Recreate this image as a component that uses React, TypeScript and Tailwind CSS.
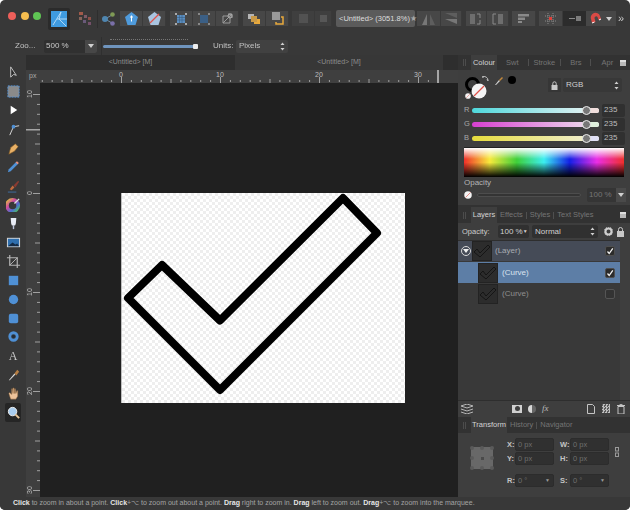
import React from 'react';

const hTicks = Array.from({ length: 42 }, (_, i) => i - 9);
const vTicks = Array.from({ length: 43 }, (_, i) => i - 11);

const Btn = ({ w = 'w-[23px]', children, className = '' }: { w?: string; children?: React.ReactNode; className?: string }) => (
  <div className={`${w} h-[15px] bg-[#474747] flex items-center justify-center border-r border-[#3a3a3a] ${className}`}>{children}</div>
);

const Field = ({ className = '', children }: { className?: string; children?: React.ReactNode }) => (
  <div className={`h-[13px] bg-[#303030] rounded-[2px] flex items-center whitespace-nowrap text-[7.5px] ${className}`}>{children}</div>
);

const UpDown = () => (
  <svg width="5" height="9" viewBox="0 0 5 9" className="ml-auto mr-[3px]"><path d="M2.5 0.5 4.5 3H.5zM2.5 8.5 4.5 6H.5z" fill="#cfcfcf" /></svg>
);

const Caret = () => (
  <svg width="6" height="4" viewBox="0 0 6 4"><path d="M0 0h6L3 4z" fill="#d0d0d0" /></svg>
);

const NoFill = ({ size }: { size: number }) => (
  <svg width={size} height={size} viewBox="0 0 16 16">
    <circle cx="8" cy="8" r="7.5" fill="#f4f4f4" />
    <path d="M3 13 13 3" stroke="#e0524a" strokeWidth="1.3" />
  </svg>
);

const Tick = ({ dark = false }: { dark?: boolean }) => (
  <div className={`w-[10px] h-[10px] rounded-[2px] flex items-center justify-center ${dark ? 'bg-[#333333] border border-[#555555]' : 'bg-[#2b2b2b] border border-[#4f4f4f]'}`}>
    {!dark && (
      <svg width="8" height="8" viewBox="0 0 8 8"><path d="M1.5 4.5 3.2 6.5 6.8 1.3" fill="none" stroke="#f2f2f2" strokeWidth="1.3" /></svg>
    )}
  </div>
);

const Thumb = ({ stroke = '#151515' }: { stroke?: string }) => (
  <div className="w-[20px] h-[20px] bg-[#2c2c2c] border border-[#232323] flex items-center justify-center">
    <svg width="18" height="14" viewBox="0 0 18 14"><path d="M1 8 4 5 7 9 15 1 17 3 7 13z" fill="none" stroke={stroke} strokeWidth="1" /></svg>
  </div>
);

const Grip = () => <div className="w-[3px] h-[7px] border-x border-[#4c4c4c] mx-[5px] shrink-0" />;

const TabSep = ({ className = '' }: { className?: string }) => <div className={`w-px h-[7px] bg-[#4f4f4f] shrink-0 ${className}`} />;

const PanelMenu = () => <div className="ml-auto mr-[4px] w-[6px] h-[6px] bg-[#b8b8b8] border-t-2 border-[#dddddd] shrink-0" />;

const Slider = ({ label, color, end }: { label: string; color: string; end: string }) => (
  <div className="flex items-center h-[14px] pl-[6px]">
    <span className="w-[8px] text-[7.5px] text-[#a8a8a8]">{label}</span>
    <div className={`w-[127px] h-[5px] rounded-full relative ${color}`}>
      <div className={`absolute right-0 top-0 w-[13px] h-[5px] rounded-r-full ${end}`} />
      <div className="absolute left-[110px] top-[-2px] w-[9px] h-[9px] rounded-full bg-[#777777] border-[1.5px] border-[#eeeeee]" />
    </div>
    <Field className="w-[23px] ml-[3px] pl-[2px] text-[#bdbdbd] text-[8px]">235</Field>
  </div>
);

const TransformField = ({ label, value, caret = false, first = false }: { label: string; value: string; caret?: boolean; first?: boolean }) => (
  <div className={`flex items-center ${first ? '' : 'ml-[6px]'}`}>
    <span className={`${first ? 'w-[8px]' : 'w-[10px]'} text-[7.5px] font-bold text-[#c4c4c4]`}>{label}</span>
    <Field className="w-[39px] pl-[2px] text-[#6f6f6f] border border-[#2c2c2c]">
      {value}
      {caret && <span className="ml-auto mr-[3px] text-[5px] text-[#999999]">▼</span>}
    </Field>
  </div>
);

const tools: React.ReactNode[] = [
  <path key="a" d="M5 2v11l3-3 3 1z" fill="#2b2b2b" stroke="#c9c9c9" />,
  <g key="b"><rect x="2" y="2" width="12" height="12" fill="#8a8a8a" stroke="#4f90d5" strokeDasharray="2 1" /></g>,
  <path key="c" d="M5 3v9l7-4.500z" fill="#ffffff" />,
  <g key="d"><path d="M4 14 8 5 14 4" fill="none" stroke="#dddddd" /><circle cx="8" cy="5" r="2" fill="#4f90d5" /></g>,
  <g key="e"><path d="M3 14 5 7 10 3 13 6 9 11z" fill="#e8b066" stroke="#7a5320" strokeWidth=".6" /></g>,
  <g key="f"><path d="M3 11 11 3 13 5 5 13 2 14z" fill="#4f90d5" /><path d="M11 3 13 5" stroke="#eb8f7c" strokeWidth="2" /></g>,
  <g key="g"><path d="M4 12 7 8 9 10 6 13z" fill="#c26a3d" /><path d="M8 8 13 3 14 4 10 10z" fill="#8a3b32" /><path d="M2 15h9" stroke="#3f6ea3" /></g>,
  <g key="h"><circle cx="7" cy="9" r="6" fill="none" stroke="url(#wheel)" strokeWidth="4" /><path d="M9 7 14 2" stroke="#dddddd" strokeWidth="1.500" /></g>,
  <g key="i"><path d="M5 2h6l-.5 6a2.500 2.500 0 0 1-5 0z" fill="#e8ecf5" /><path d="M8 10v4" stroke="#b9c2d9" strokeWidth="1.500" /></g>,
  <g key="j"><rect x="1" y="3" width="14" height="10" fill="#d8d8d8" /><rect x="2" y="4" width="12" height="8" fill="#2f6fae" /><path d="M2 12 7 8l3 2 2-1 2 3z" fill="#142a44" /></g>,
  <g key="k"><path d="M4 1v11h11M1 4h11v11" fill="none" stroke="#b4b4b4" strokeWidth="1.300" /><path d="M4 12 12 4" stroke="#b4b4b4" /></g>,
  <rect key="l" x="3" y="3" width="10" height="10" fill="#4f90d5" />,
  <circle key="m" cx="8" cy="8" r="5" fill="#4f90d5" />,
  <rect key="n" x="3" y="3" width="10" height="10" rx="2" fill="#4f90d5" />,
  <g key="o"><circle cx="8" cy="8" r="4" fill="none" stroke="#4f90d5" strokeWidth="3" /><circle cx="8" cy="8" r="1.500" fill="#1e2b3a" /></g>,
  null,
  <g key="q"><path d="M3 14 9 7 10 8 4 14z" fill="#dddddd" /><path d="M9 7 12 3l2 2-3 4z" fill="#b77f45" /></g>,
  <path key="r" d="M5 14 3 8l1-1 2 2V3l1 0 .5 5V2l1 0 .5 6V3h1l.5 5 1-3h1v6l-2 3z" fill="#eec39a" stroke="#8a6038" strokeWidth=".5" />,
  <g key="s"><circle cx="7" cy="7" r="4.500" fill="#a9cdef" stroke="#eeeeee" /><path d="M10 10 14 14" stroke="#e9c79a" strokeWidth="2" /></g>,
];

export default function App() {
  return (
    <div className="w-[630px] h-[510px] bg-white overflow-hidden font-['Liberation_Sans',sans-serif]">
      <div className="w-full h-full bg-[#383838] rounded-[5px] overflow-hidden flex flex-col text-[#c2c2c2] blur-[0.25px]">
        {/* top toolbar */}
        <div className="h-[37px] flex items-center pl-[8px] shrink-0">
          <div className="flex gap-[4.500px] self-start mt-[12px]">
            <div className="w-[8px] h-[8px] rounded-full bg-[#ee5f5a]" />
            <div className="w-[8px] h-[8px] rounded-full bg-[#f5bd4f]" />
            <div className="w-[8px] h-[8px] rounded-full bg-[#5fc454]" />
          </div>
          <div className="w-[22px] h-[22px] ml-[7px] bg-[#2b2b2b] rounded-[2px] flex items-center justify-center">
            <svg width="16" height="16" viewBox="0 0 16 16">
              <rect width="16" height="16" fill="#3f9be0" />
              <path d="M2 14 10 1M6 8h10M10 1l-2 7 7 7" fill="none" stroke="#c9e6fb" strokeWidth=".8" />
            </svg>
          </div>
          <svg width="13" height="13" viewBox="0 0 13 13" className="ml-[9px]">
            <rect x="0" y="0" width="4" height="3" fill="#a15a4a" /><rect x="5" y="3" width="3" height="3" fill="#7e5a66" /><rect x="0" y="5" width="3" height="3" fill="#88645a" /><rect x="9" y="5" width="3" height="3" fill="#8f5048" /><rect x="4" y="8" width="3" height="3" fill="#6a5a7a" /><rect x="9" y="10" width="3" height="3" fill="#75506a" />
          </svg>
          <div className="w-px h-[18px] bg-[#2e2e2e] ml-[5px]" />
          <svg width="13" height="14" viewBox="0 0 13 14" className="ml-[4px]">
            <path d="M3 7 10 3M3 7l7 4" stroke="#6f8fa8" /><circle cx="3" cy="7" r="3" fill="#4f86b0" /><circle cx="10.500" cy="2.500" r="2.300" fill="#7f9a55" /><circle cx="10.500" cy="11.500" r="2.300" fill="#7a6fa8" />
          </svg>
          <div className="flex ml-[5px]">
            <Btn><svg width="13" height="13" viewBox="0 0 13 13"><path d="M6.500 0 13 5l-2.500 8h-8L0 5z" fill="#4f9bdc" /><path d="M6.500 3.500v6M5 5h3" stroke="#fff" /></svg></Btn>
            <Btn><svg width="13" height="13" viewBox="0 0 13 13"><path d="M6.500 0 13 5l-2.500 8h-8L0 5z" fill="#a9c4e0" /><path d="M2 11 11 2" stroke="#e0524a" strokeWidth="1.300" /></svg></Btn>
          </div>
          <div className="flex ml-[4px]">
            <Btn><svg width="12" height="12" viewBox="0 0 12 12"><rect x="2" y="2" width="8" height="8" fill="#5b8ec0" /><path d="M2 4.500h8M2 7h8M4.500 2v8M7 2v8" stroke="#3a5e82" strokeWidth=".6" /><rect x="0" y="0" width="2" height="2" fill="#aaaaaa" /><rect x="10" y="0" width="2" height="2" fill="#aaaaaa" /><rect x="0" y="10" width="2" height="2" fill="#aaaaaa" /><rect x="10" y="10" width="2" height="2" fill="#aaaaaa" /></svg></Btn>
            <Btn><svg width="12" height="12" viewBox="0 0 12 12"><rect x="2" y="2" width="8" height="8" fill="#3b5f85" /><rect x="0" y="0" width="2" height="2" fill="#888888" /><rect x="10" y="0" width="2" height="2" fill="#888888" /><rect x="0" y="10" width="2" height="2" fill="#888888" /><rect x="10" y="10" width="2" height="2" fill="#888888" /></svg></Btn>
            <Btn><svg width="13" height="13" viewBox="0 0 13 13"><path d="M2 11V4h7v7zM7 2h4v4M2 11 11 2" fill="none" stroke="#9a9a9a" /><circle cx="9" cy="4" r="2" fill="none" stroke="#b0b0b0" /></svg></Btn>
          </div>
          <div className="flex ml-[4px]">
            <Btn><svg width="12" height="12" viewBox="0 0 12 12"><rect x="0" y="1" width="6" height="5" fill="#b5b5b5" /><rect x="6" y="6" width="6" height="5" fill="#e8a93c" /><rect x="3" y="3" width="6" height="6" fill="#c99a48" /></svg></Btn>
            <Btn><svg width="13" height="13" viewBox="0 0 13 13"><rect x="1" y="0" width="8" height="8" fill="#9a9a9a" /><path d="M10 5h2v7H5v-2" fill="none" stroke="#e8a93c" strokeWidth="1.500" /></svg></Btn>
          </div>
          <div className="flex ml-[3px] opacity-50">
            <Btn><div className="w-[9px] h-[9px] bg-[#6d6d6d]" /></Btn>
            <Btn w="w-[17px]"><div className="w-[7px] h-[7px] bg-[#777777]" /></Btn>
          </div>
          <div className="w-[79px] h-[17px] ml-[4px] bg-[#5b5b5b] rounded-[2px] flex items-center pl-[3px] text-[7.5px] text-[#dedede] whitespace-nowrap">
            <span>&lt;Untitled&gt; (3051.8%)</span>
            <span className="ml-auto mr-[2px] text-[#a5a5a5]">★</span>
          </div>
          <div className="flex ml-[2px]">
            <Btn w="w-[24px]"><svg width="13" height="12" viewBox="0 0 13 12"><path d="M5 1v11H0z" fill="#777777" /><path d="M8 1v11h5z" fill="#5e5e5e" /></svg></Btn>
            <Btn w="w-[21px]"><svg width="13" height="12" viewBox="0 0 13 12"><path d="M12 0H0l12 5z" fill="#5e5e5e" /><path d="M12 6H0l12 5z" fill="#777777" /></svg></Btn>
          </div>
          <div className="flex ml-[4px]">
            <Btn w="w-[21px]"><svg width="12" height="12" viewBox="0 0 12 12"><rect x="0" y="1" width="5" height="10" fill="#6e6e6e" /><path d="M7 1h3v4M7 11h3V7" fill="none" stroke="#8a8a8a" /></svg></Btn>
            <Btn w="w-[22px]"><svg width="12" height="12" viewBox="0 0 12 12"><rect x="6" y="1" width="5" height="10" fill="#6e6e6e" /><path d="M4 1H1v10h3" fill="none" stroke="#8a8a8a" /></svg></Btn>
          </div>
          <Btn w="w-[24px]" className="ml-[3px]"><svg width="11" height="9" viewBox="0 0 11 9"><rect x="0" y="0" width="11" height="2.500" fill="#8a8a8a" /><rect x="0" y="3.500" width="7" height="2.500" fill="#8a8a8a" /><rect x="0" y="7" width="4" height="2" fill="#8a8a8a" /></svg></Btn>
          <div className="flex ml-[3px]">
            <Btn w="w-[24px]"><svg width="11" height="11" viewBox="0 0 11 11"><path d="M0 3h11M0 8h11M3 0v11M8 0v11" stroke="#8a8a8a" strokeDasharray="1 1" /><rect x="4" y="4" width="3" height="3" fill="#e0403a" /></svg></Btn>
            <div className="w-[23px] h-[15px] bg-[#2c2c2c] flex items-center justify-center"><svg width="12" height="7" viewBox="0 0 12 7"><path d="M0 3.500h6" stroke="#8a8a8a" /><rect x="7" y="1" width="5" height="5" fill="#7b7b7b" /></svg></div>
          </div>
          <div className="w-[30px] h-[15px] bg-[#474747] flex items-center pl-[4px] gap-[3px]">
            <svg width="13" height="13" viewBox="0 0 13 13"><path d="M2 11 1 7a4.500 4.500 0 0 1 9-3l1 3-2.500 1-1-3a1.700 1.700 0 0 0-3 1l1 4z" fill="#d94a45" /><path d="M2 11l2.500-1M9 8l2-1" stroke="#ffffff" /></svg>
            <Caret />
          </div>
          <span className="ml-[2px] text-[11px] leading-none text-[#c8c8c8]">»</span>
        </div>

        {/* context bar */}
        <div className="h-[18px] flex items-center shrink-0 text-[8px]">
          <span className="ml-[15px] w-[29px]">Zoo...</span>
          <Field className="w-[53px] text-[8px]">
            <span className="pl-[2px] text-[#c9c9c9]">500 %</span>
            <div className="ml-auto w-[12px] h-full bg-[#474747] rounded-r-[2px] flex items-center justify-center"><Caret /></div>
          </Field>
          <div className="w-[96px] ml-[4px] h-[18px] border-l border-[#2f2f2f] relative">
            <div className="absolute left-[8px] top-[2px] w-[78px] border-t border-dotted border-[#777777]" />
            <div className="absolute left-[1px] top-[8px] w-[92px] h-[3px] bg-[#6f94bd] rounded-full" />
            <div className="absolute left-[91px] top-[7px] w-[5px] h-[5px] bg-[#eeeeee] rounded-[1px]" />
          </div>
          <span className="ml-[16px] w-[23px]">Units:</span>
          <Field className="w-[52px] pl-[3px] bg-[#414141] text-[8px]">Pixels<UpDown /></Field>
        </div>

        <div className="flex h-[442px] shrink-0">
          {/* tools */}
          <div className="w-[26px] pt-[8px] shrink-0 flex flex-col items-center">
            <svg width="0" height="0" className="absolute">
              <defs>
                <linearGradient id="wheel" x1="0" y1="0" x2="1" y2="1">
                  <stop offset="0" stopColor="#e0c040" /><stop offset=".35" stopColor="#d04aa0" /><stop offset=".7" stopColor="#4a70d0" /><stop offset="1" stopColor="#50c060" />
                </linearGradient>
              </defs>
            </svg>
            {tools.map((t, i) => (
              <div key={i} className={`w-[16px] h-[18.900px] flex items-center justify-center ${i === 18 ? 'bg-[#252525] rounded-[2px]' : ''}`}>
                {t ? <svg width="15" height="15" viewBox="0 0 16 16">{t}</svg> : <span className="font-['Liberation_Serif',serif] text-[12px] text-[#c8c8c8]">A</span>}
              </div>
            ))}
          </div>

          {/* document */}
          <div className="w-[432px] shrink-0 flex flex-col">
            <div className="h-[15px] flex text-[7px] text-[#8c8c8c]">
              <div className="w-[209px] bg-[#2e2e2e] flex items-center justify-center">&lt;Untitled&gt; [M]</div>
              <div className="w-[208px] bg-[#373737] flex items-center justify-center">&lt;Untitled&gt; [M]</div>
              <div className="flex-1 bg-[#2e2e2e]" />
            </div>
            <div className="h-[13px] bg-[#3f3f3f]">
              <svg width="432" height="13" viewBox="0 0 432 13">
                <text x="3" y="8" fontSize="7" fill="#aaaaaa">px</text>
                {hTicks.map((n) => {
                  const x = 95 + (n * 99) / 10;
                  return x < 15 ? null : (
                    <rect key={n} x={x} y={n % 10 === 0 ? 7 : n % 5 === 0 ? 9 : 10} width="1" height={n % 10 === 0 ? 6 : n % 5 === 0 ? 4 : 2} fill="#a0a0a0" />
                  );
                })}
                {[0, 10, 20, 30].map((n) => (
                  <text key={n} x={95 + n * 9.9} y="7" fontSize="7" textAnchor="middle" fill="#bdbdbd">{n}</text>
                ))}
                <rect x="411" y="0" width="2" height="13" fill="#a5a5a5" />
              </svg>
            </div>
            <div className="flex-1 flex min-h-0">
              <div className="w-[14px] bg-[#3f3f3f] shrink-0">
                <svg width="14" height="414" viewBox="0 0 14 414">
                  {vTicks.map((n) => {
                    const y = 110 + n * 9.9;
                    return y < 2 ? null : (
                      <rect key={n} x={n % 10 === 0 ? 7 : n % 5 === 0 ? 9 : 11} y={y} width={n % 10 === 0 ? 7 : n % 5 === 0 ? 5 : 3} height="1" fill="#a0a0a0" />
                    );
                  })}
                  {[-10, 0, 10, 20, 30].map((n) => (
                    <text key={n} transform={`translate(6 ${110 + n * 9.9}) rotate(-90)`} fontSize="7" textAnchor="middle" fill="#bdbdbd">{Math.abs(n)}</text>
                  ))}
                  <rect x="0" y="46" width="14" height="1.500" fill="#a5a5a5" />
                </svg>
              </div>
              <div className="flex-1 bg-[#202020] pl-[81px] pt-[110px]">
                <div className="w-[284px] h-[210px] bg-[repeating-conic-gradient(#eeeeee_0_25%,#ffffff_0_50%)] bg-[length:6px_6px] border-l border-[#bdbdbd]">
                  <svg width="283" height="210" viewBox="0 0 283 210">
                    <path d="M6 105 40 72 98 127.500 221 5 255 40 98 197z" fill="none" stroke="#000000" strokeWidth="8" strokeLinejoin="round" />
                  </svg>
                </div>
              </div>
            </div>
          </div>

          {/* right panels */}
          <div className="flex-1 flex flex-col text-[7.5px] min-w-0">
            {/* colour */}
            <div className="h-[15px] bg-[#323232] flex items-center text-[#757575]">
              <Grip />
              <div className="w-[26px] h-full bg-[#3e3e3e] flex items-center justify-center text-[#d4d4d4]">Colour</div>
              <span className="ml-[9px]">Swt</span>
              <TabSep className="ml-[9px]" />
              <span className="ml-[5px]">Stroke</span>
              <TabSep className="ml-[5px]" />
              <span className="ml-[9px]">Brs</span>
              <TabSep className="ml-[9px]" />
              <span className="ml-[10px]">Apr</span>
              <PanelMenu />
            </div>
            <div className="h-[135px] bg-[#3e3e3e] flex flex-col">
              <div className="h-[32px] flex items-start pt-[8px] relative">
                <div className="absolute left-[7px] top-[7px] w-[15px] h-[15px] rounded-full border-[3px] border-black" />
                <div className="absolute left-[13px] top-[13px]"><NoFill size={16} /></div>
                <div className="absolute left-[7px] top-[23px]"><NoFill size={6} /></div>
                <svg width="8" height="8" viewBox="0 0 8 8" className="absolute left-[23px] top-[6px]"><path d="M1 1a4 4 0 0 1 6 4M7 5 6 3M1 1l2 0" fill="none" stroke="#bcbcbc" /></svg>
                <svg width="10" height="10" viewBox="0 0 10 10" className="absolute left-[36px] top-[6px]"><path d="M1 9 5 4l1 1-4 4z" fill="#d6d6d6" /><path d="M5 4 8 1l1 1-3 3z" fill="#c68a3c" /></svg>
                <div className="absolute left-[50px] top-[6px] w-[8px] h-[8px] rounded-full bg-black" />
                <div className="ml-[90px] w-[13px] h-[14px] bg-[#363636] flex items-center justify-center">
                  <svg width="7" height="9" viewBox="0 0 7 9"><rect x="0.500" y="4" width="6" height="5" fill="#c8c8c8" /><path d="M1.800 4V2.500a1.700 1.700 0 0 1 3.400 0V4" fill="none" stroke="#c8c8c8" /></svg>
                </div>
                <Field className="w-[59px] h-[14px] ml-[2px] pl-[3px] bg-[#383838] text-[#cfcfcf] text-[8px]">RGB<UpDown /></Field>
              </div>
              <div className="mt-[1px]">
                <Slider label="R" color="bg-[linear-gradient(90deg,#4fd8dc,#f0f4f4)]" end="bg-[#f0dedc]" />
                <Slider label="G" color="bg-[linear-gradient(90deg,#d63fd0,#f0e6ef)]" end="bg-[#dff0dd]" />
                <Slider label="B" color="bg-[linear-gradient(90deg,#e6dc3c,#f0f0dc)]" end="bg-[#e0e0f6]" />
              </div>
              <div className="mx-[6px] mt-[2px] h-[30px] border-t border-[#222222] bg-[linear-gradient(180deg,#ffffff_0%,transparent_38%,transparent_50%,#000000_100%),linear-gradient(90deg,#f0302a_0%,#f7e93c_16%,#3fd03a_33%,#3ceef0_50%,#1420e6_66%,#ea2ee6_83%,#f0302a_100%)]" />
              <div className="pl-[6px] mt-[1px] h-[10px] text-[8px] text-[#b5b5b5] flex items-center">Opacity</div>
              <div className="flex items-center pl-[6px]">
                <NoFill size={8} />
                <div className="ml-[5px] w-[104px] h-[4px] rounded-full bg-[#343434] border border-[#4d4d4d]" />
                <Field className="ml-[6px] w-[29px] h-[14px] pl-[2px] text-[#757575] bg-[#353535] rounded-r-none text-[8px]">100 %</Field>
                <div className="w-[10px] h-[14px] bg-[#4a4a4a] flex items-center justify-center"><Caret /></div>
              </div>
            </div>

            {/* layers */}
            <div className="h-[2px] bg-[#323232]" />
            <div className="h-[16px] bg-[#323232] flex items-center text-[#757575]">
              <Grip />
              <div className="w-[26px] h-full bg-[#3e3e3e] flex items-center justify-center text-[#d4d4d4]">Layers</div>
              <span className="ml-[3px]">Effects</span>
              <TabSep className="ml-[3px]" />
              <span className="ml-[3px]">Styles</span>
              <TabSep className="ml-[3px]" />
              <span className="ml-[3px] whitespace-nowrap">Text Styles</span>
              <PanelMenu />
            </div>
            <div className="h-[17px] bg-[#3e3e3e] flex items-center">
              <span className="ml-[4px] w-[36px] font-medium text-[#cdcdcd]">Opacity:</span>
              <Field className="w-[31px] pl-[2px] text-[#d0d0d0] text-[8px]">100 %<span className="ml-auto mr-[3px] text-[5px]">▼</span></Field>
              <Field className="w-[66px] ml-[3px] pl-[3px] text-[#cfcfcf] text-[8px]">Normal<UpDown /></Field>
              <svg width="9" height="9" viewBox="0 0 9 9" className="ml-[6px]"><circle cx="4.500" cy="4.500" r="3" fill="none" stroke="#cfcfcf" strokeWidth="2" /><circle cx="4.500" cy="4.500" r="4.300" fill="none" stroke="#cfcfcf" strokeDasharray="1.200 1.200" /></svg>
              <svg width="7" height="10" viewBox="0 0 7 10" className="ml-[4px]"><rect x="0" y="4" width="7" height="6" fill="#c8c8c8" /><path d="M1.500 4V2.500a2 2 0 0 1 4 0V4" fill="none" stroke="#c8c8c8" /></svg>
            </div>
            <div className="flex-1 flex flex-col min-h-0 bg-[#3e3e3e]">
              <div className="h-[160px] w-[162px] bg-[#393939] border-t border-[#2e2e2e] flex flex-col">
                <div className="h-[20px] bg-[#454b57] flex items-center text-[#a8acb2]">
                  <div className="w-[10px] h-[10px] ml-[3px] rounded-full border border-[#d8d8d8] flex items-center justify-center">
                    <svg width="6" height="4" viewBox="0 0 6 4"><path d="M0 0h6L3 4z" fill="#f0f0f0" /></svg>
                  </div>
                  <div className="ml-px"><Thumb /></div>
                  <span className="ml-[3px] text-[8px]">(Layer)</span>
                  <div className="ml-auto mr-[5px]"><Tick /></div>
                </div>
                <div className="h-[21px] bg-[#5d7ea6] flex items-center text-[#dbe4ef] mt-[1px]">
                  <div className="ml-[20px]"><Thumb /></div>
                  <span className="ml-[4px] text-[8px]">(Curve)</span>
                  <div className="ml-auto mr-[5px]"><Tick /></div>
                </div>
                <div className="h-[21px] flex items-center text-[#8f8f8f]">
                  <div className="ml-[20px]"><Thumb /></div>
                  <span className="ml-[4px] text-[8px]">(Curve)</span>
                  <div className="ml-auto mr-[5px]"><Tick dark /></div>
                </div>
              </div>
              <div className="h-[16px] flex items-center bg-[#3e3e3e] border-t border-[#2e2e2e]">
                <svg width="12" height="10" viewBox="0 0 12 10" className="ml-[3px]"><path d="M0 2 6 0l6 2-6 2zM0 5l6 2 6-2M0 8l6 2 6-2" fill="none" stroke="#b5b5b5" /></svg>
                <div className="ml-[39px] w-[10px] h-[8px] bg-[#d0d0d0] flex items-center justify-center"><div className="w-[5px] h-[5px] rounded-full bg-[#3e3e3e]" /></div>
                <div className="ml-[6px] w-[8px] h-[8px] rounded-full bg-[linear-gradient(90deg,#d8d8d8_50%,#666666_50%)]" />
                <span className="ml-[6px] font-['Liberation_Serif',serif] italic text-[9px] text-[#bcbcbc]">fx</span>
                <svg width="8" height="10" viewBox="0 0 8 10" className="ml-auto"><path d="M.5.5h5l2 2v7H.5z" fill="none" stroke="#c4c4c4" /></svg>
                <div className="ml-[7px] w-[8px] h-[9px] bg-[repeating-conic-gradient(#bdbdbd_0_25%,#5c5c5c_0_50%)] bg-[length:3px_3px]" />
                <svg width="8" height="10" viewBox="0 0 8 10" className="ml-[7px] mr-[5px]"><path d="M1 2.500h6V10H1zM0 1.500h8M3 1V.3h2V1" fill="none" stroke="#c4c4c4" /></svg>
              </div>
            </div>

            {/* transform */}
            <div className="h-[16px] bg-[#323232] flex items-center text-[#757575] shrink-0">
              <Grip />
              <div className="w-[36px] h-full bg-[#3e3e3e] flex items-center justify-center text-[#d4d4d4]">Transform</div>
              <span className="ml-[3px]">History</span>
              <TabSep className="ml-[3px]" />
              <span className="ml-[3px]">Navigator</span>
            </div>
            <div className="h-[64px] bg-[#3e3e3e] shrink-0 flex pl-[13px] pt-[5px]">
              <div className="w-[22px] h-[22px] mt-[9px] bg-[#686868] rounded-[2px] shrink-0 flex items-center justify-center relative">
                <div className="w-[3px] h-[3px] bg-[#4a4a4a]" />
                <div className="absolute left-[-1px] top-[-1px] w-[4px] h-[4px] rounded-full bg-[#5a5a5a]" />
                <div className="absolute right-[-1px] top-[-1px] w-[4px] h-[4px] rounded-full bg-[#5a5a5a]" />
                <div className="absolute left-[-1px] bottom-[-1px] w-[4px] h-[4px] rounded-full bg-[#5a5a5a]" />
                <div className="absolute right-[-1px] bottom-[-1px] w-[4px] h-[4px] rounded-full bg-[#5a5a5a]" />
                <div className="absolute left-[9px] top-[-1px] w-[4px] h-[4px] rounded-full bg-[#5a5a5a]" />
                <div className="absolute left-[9px] bottom-[-1px] w-[4px] h-[4px] rounded-full bg-[#5a5a5a]" />
                <div className="absolute left-[-1px] top-[9px] w-[4px] h-[4px] rounded-full bg-[#5a5a5a]" />
                <div className="absolute right-[-1px] top-[9px] w-[4px] h-[4px] rounded-full bg-[#5a5a5a]" />
              </div>
              <div className="ml-[14px] flex flex-col gap-[1px]">
                <div className="flex">
                  <TransformField label="X:" value="0 px" first />
                  <TransformField label="W:" value="0 px" />
                </div>
                <div className="flex">
                  <TransformField label="Y:" value="0 px" first />
                  <TransformField label="H:" value="0 px" />
                </div>
                <div className="flex mt-[8px]">
                  <TransformField label="R:" value="0 °" caret first />
                  <TransformField label="S:" value="0 °" caret />
                </div>
              </div>
              <svg width="4" height="10" viewBox="0 0 4 10" className="ml-[6px] mt-[9px]"><rect x=".5" y=".5" width="3" height="3.500" fill="none" stroke="#9a9a9a" /><rect x=".5" y="6" width="3" height="3.500" fill="none" stroke="#9a9a9a" /></svg>
            </div>
          </div>
        </div>

        {/* status bar */}
        <div className="h-[13px] bg-[#383838] pl-[13px] flex items-center text-[7px] text-[#a4a4a4] whitespace-nowrap shrink-0">
          <span>
            <b className="text-[#e6e6e6]">Click</b> to zoom in about a point. <b className="text-[#e6e6e6]">Click</b>+⌥ to zoom out about a point. <b className="text-[#e6e6e6]">Drag</b> right to zoom in. <b className="text-[#e6e6e6]">Drag</b> left to zoom out. <b className="text-[#e6e6e6]">Drag</b>+⌥ to zoom into the marquee.
          </span>
        </div>
      </div>
    </div>
  );
}
